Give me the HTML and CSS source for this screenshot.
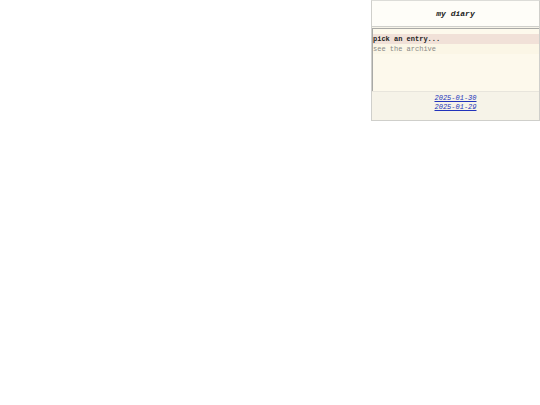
FILE: index.html
```html
<!DOCTYPE html>
<html>
<head>
<meta charset="utf-8">
<link rel="stylesheet" href="styles.css">
</head>
<body>
<div class="page">
  <aside class="panel">
    <header class="head">my diary</header>
    <div class="listbox">
      <div class="opt opt-sel">pick an entry...</div>
      <div class="opt opt-dim">see the archive</div>
    </div>
    <nav class="links">
      <a href="#">2025-01-30</a>
      <a href="#">2025-01-29</a>
    </nav>
  </aside>
</div>
</body>
</html>
```
FILE: styles.css
```css
html, body {
  margin: 0;
  padding: 0;
  background: #ffffff;
}
.page {
  display: flex;
  justify-content: flex-end;
  font-family: "Liberation Mono", "DejaVu Sans Mono", monospace;
}
.panel {
  width: 167px;
  border: 1px solid #cfcfcb;
  border-top-color: #dcdcd8;
  background: #f7f4e9;
  display: flex;
  flex-direction: column;
}
.head {
  height: 25px;
  display: flex;
  align-items: center;
  justify-content: center;
  font-size: 8px;
  font-weight: bold;
  font-style: italic;
  color: #222;
  background: #fefdf8;
  border-bottom: 1px solid #cfcfcb;
}
.listbox {
  box-sizing: border-box;
  margin-top: 1px;
  height: 63px;
  padding-top: 5px;
  border-top: 1px solid #a9a9a6;
  border-left: 1px solid #a9a9a6;
  background: #fdf9ec;
}
.opt {
  font-size: 7px;
  line-height: 10px;
}
.opt-sel {
  background: #f1e1d8;
  font-weight: bold;
  color: #222;
}
.opt-dim {
  color: #8a8a86;
  background: #fbf6e6;
}
.links {
  border-top: 1px solid #e8e5dc;
  padding: 2px 0 8px;
  display: flex;
  flex-direction: column;
  align-items: center;
  background: #f6f3e8;
}
.links a {
  font-size: 7px;
  line-height: 9px;
  font-style: italic;
  color: #2233bb;
  text-decoration: underline;
}
```
